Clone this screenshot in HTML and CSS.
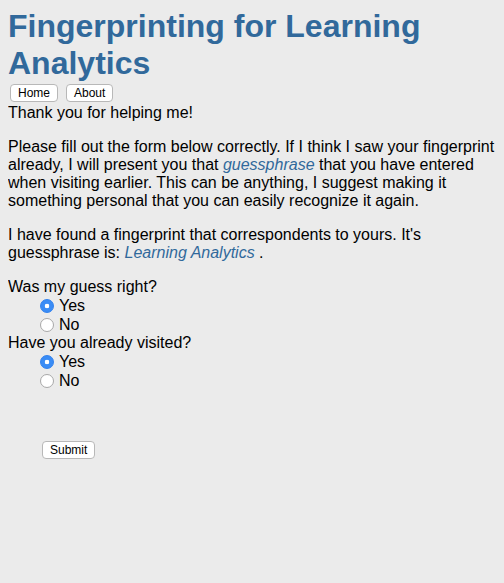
FILE: index.html
```html
<!DOCTYPE html>
<html>
<head>
<meta charset="utf-8">
<link rel="stylesheet" href="styles.css">
</head>
<body>
<h1 class="title">Fingerprinting for Learning Analytics</h1>
<nav class="nav">
  <button class="btn">Home</button>
  <button class="btn">About</button>
</nav>
<p class="first">Thank you for helping me!</p>
<p>Please fill out the form below correctly. If I think I saw your fingerprint already, I will present you that <em class="hl">guessphrase</em> that you have entered when visiting earlier. This can be anything, I suggest making it something personal that you can easily recognize it again.</p>
<p>I have found a fingerprint that correspondents to yours. It's guessphrase is: <em class="hl">Learning Analytics</em> .</p>
<form class="form">
  <div class="q">Was my guess right?</div>
  <div class="opts">
    <label class="opt"><input type="radio" name="a" class="radio" checked> Yes</label>
    <label class="opt"><input type="radio" name="a" class="radio"> No</label>
  </div>
  <div class="q">Have you already visited?</div>
  <div class="opts">
    <label class="opt"><input type="radio" name="b" class="radio" checked> Yes</label>
    <label class="opt"><input type="radio" name="b" class="radio"> No</label>
  </div>
  <div class="submit-row"><button type="button" class="btn">Submit</button></div>
</form>
</body>
</html>
```

FILE: styles.css
```css
html { background: #ebebeb; }
body {
  margin: 8px;
  font-family: "Liberation Sans", Arial, sans-serif;
  font-size: 16px;
  color: #000;
}
.title {
  margin: 0;
  font-size: 32px;
  line-height: 37px;
  font-weight: bold;
  color: #31699b;
}
.nav {
  display: flex;
  gap: 8px;
  margin-top: 2px;
  padding-left: 2px;
}
.btn {
  font-family: "Liberation Sans", Arial, sans-serif;
  font-size: 12px;
  height: 18px;
  padding: 0 7px;
  background: #fff;
  border: 1px solid #b8b8b8;
  border-radius: 4px;
  color: #000;
  line-height: 16px;
}
p { margin: 0 0 16px; line-height: 18px; }
p.first { margin-top: 2px; }
.hl { color: #31699b; }
.form { margin-top: 14px; }
.q { line-height: 18px; }
.opts { padding-left: 32px; }
.opt { display: flex; align-items: center; height: 19px; line-height: 19px; }
.radio {
  appearance: none;
  -webkit-appearance: none;
  width: 14px;
  height: 14px;
  margin: 0 5px 0 0;
  border-radius: 50%;
  border: 1px solid #a8a8a8;
  background: #fff;
  box-sizing: border-box;
}
.radio:checked {
  border-color: #2f80ee;
  background: radial-gradient(circle, #fff 0 2px, #3a8cf5 2.6px);
}
.submit-row { padding-left: 34px; margin-top: 50px; }
```
